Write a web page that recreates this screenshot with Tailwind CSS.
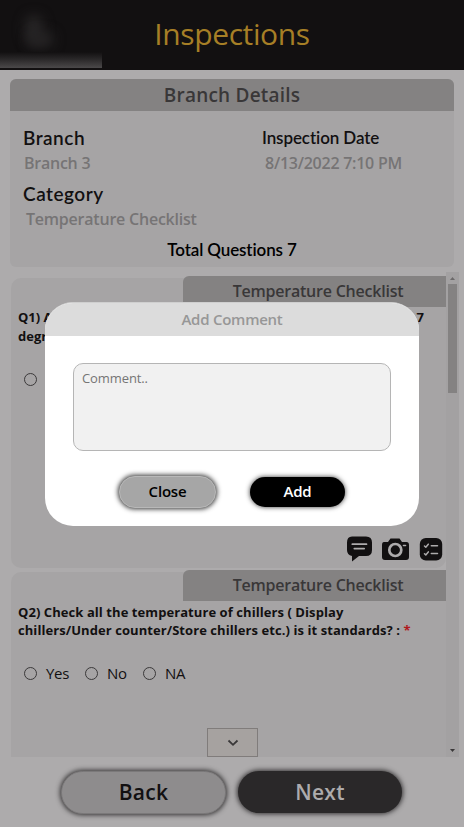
<!DOCTYPE html>
<html lang="en">
<head>
<meta charset="utf-8">
<title>Inspections</title>
<script src="https://cdn.jsdelivr.net/npm/@tailwindcss/browser@4"></script>
</head>
<body class="relative w-[464px] h-[827px] overflow-hidden bg-[#adabac] font-['Open_Sans',sans-serif] whitespace-nowrap text-[#121011]">
<header class="relative h-[70px] bg-[#121011] flex justify-center">
  <div class="absolute left-0 top-0 w-[102px] h-[68px] overflow-hidden">
    <div class="absolute left-[25px] top-[15px] w-[18px] h-[30px] rounded-full bg-[#272526] blur-[6px]"></div>
    <div class="absolute left-[28px] top-[32px] w-[26px] h-[15px] rounded-full bg-[#252324] blur-[6px]"></div>
    <div class="absolute inset-x-0 bottom-0 h-[16px] bg-linear-to-b from-[#121011] to-[#4b494a]"></div>
  </div>
  <h1 class="text-[30px] leading-[68px] tracking-[-0.4px] text-[#a67f26]">Inspections</h1>
</header>
<main class="pt-[9px]">
  <section class="ml-[10px] w-[444px] h-[188px] rounded-[6px] overflow-hidden bg-[#a6a4a5] flex flex-col">
    <h2 class="h-[32px] leading-[32px] text-center bg-[#848282] text-[#393738] text-[19px] font-semibold tracking-[0.2px]">Branch Details</h2>
    <div class="h-[112px] pl-[13px] pt-[14px] flex">
      <dl class="w-[239px]">
        <dt class="font-[Lato] font-semibold text-[19px] leading-[26px] tracking-[0.5px]">Branch</dt>
        <dd class="pl-px font-semibold text-[16px] leading-[24px] tracking-[-0.25px] text-[#767475]">Branch 3</dd>
        <dt class="mt-[6px] font-[Lato] font-semibold text-[19px] leading-[26px] tracking-[0.5px]">Category</dt>
        <dd class="pl-[3px] font-semibold text-[16px] leading-[24px] tracking-[-0.22px] text-[#767475]">Temperature Checklist</dd>
      </dl>
      <dl>
        <dt class="font-[Lato] font-semibold text-[17px] leading-[26px] tracking-[-0.1px]">Inspection Date</dt>
        <dd class="pl-[3px] font-semibold text-[16px] leading-[24px] tracking-[-0.25px] text-[#767475]">8/13/2022 7:10 PM</dd>
      </dl>
    </div>
    <p class="pt-[14px] text-center font-[Lato] font-semibold text-[17px] leading-[26px] tracking-[-0.12px] text-black">Total Questions 7</p>
  </section>
  <section class="mt-[5px] ml-[11px] w-[448px] h-[485px] flex overflow-hidden">
    <div class="w-[435px] pt-[6px] flex flex-col gap-[4px]">
      <article class="h-[290px] shrink-0 rounded-[10px] bg-[#a6a4a5] flex flex-col">
        <h3 class="self-end -mt-[2px] w-[263px] h-[31px] shrink-0 leading-[31px] pl-[7px] rounded-tl-[6px] text-center bg-[#848282] text-[#393738] text-[16px] font-semibold tracking-[-0.22px]">Temperature Checklist</h3>
        <div class="pt-px pl-[7px] pr-[22px] text-[13px] font-bold leading-[19px]">
          <p class="flex justify-between"><span>Q1) Are</span><span>7</span></p><p>degree</p>
        </div>
        <div class="mt-[27px] pl-[13px]"><span class="block size-[13px] rounded-full border border-[#3b393a]"></span></div>
        <div class="mt-auto mb-[5px] pl-[335px] flex items-center">
          <svg class="w-[27px] h-[28px]" viewBox="0 0 27 28"><path fill="#121011" d="M6 1.5H20Q26 1.5 26 7.5V15Q26 21 20 21H13L6 26.5V21Q1 20 1 15V7.5Q1 1.5 6 1.5Z"/><path stroke="#adabac" stroke-width="1.7" stroke-linecap="round" d="M6.3 9.2H20.5M8.3 13.6H18.2"/></svg>
          <svg class="ml-[8px] w-[28px] h-[28px]" viewBox="0 0 28 28"><path fill="#121011" d="M3 7H7L9.5 3.5H18.5L21 7H25.5Q28 7 28 10V22Q28 25 25 25H4Q1 25 1 22V10Q1 7 3 7Z"/><circle cx="14.3" cy="15" r="6" fill="#121011" stroke="#adabac" stroke-width="2.7"/><path stroke="#adabac" stroke-width="1.6" stroke-linecap="round" d="M22.5 10.5H24.5"/></svg>
          <svg class="ml-[10px] w-[24px] h-[28px]" viewBox="0 0 24 28"><rect x=".8" y="3" width="22.4" height="22.5" rx="6" fill="#121011"/><path fill="none" stroke="#adabac" stroke-width="1.5" stroke-linecap="round" stroke-linejoin="round" d="M5.5 11L6.8 12.2L9.3 9.2M12.3 10.7H18.5M5.5 18.7L6.8 19.9L9.3 16.9M12.3 18.4H18.5"/></svg>
        </div>
      </article>
      <article class="h-[300px] shrink-0 rounded-[10px] bg-[#a6a4a5] flex flex-col">
        <h3 class="self-end -mt-[2px] w-[263px] h-[31px] shrink-0 leading-[31px] pl-[7px] rounded-tl-[6px] text-center bg-[#848282] text-[#393738] text-[16px] font-semibold tracking-[-0.22px]">Temperature Checklist</h3>
        <p class="pt-[2px] pl-[7px] text-[13px] font-bold leading-[18px] tracking-[0.07px]">Q2) Check all the temperature of chillers ( Display<br>chillers/Under counter/Store chillers etc.) is it standards? : <span class="text-[#b0191c]">*</span></p>
        <div class="mt-[23px] pl-[13px] flex items-center text-[15px] leading-[22px] tracking-[-0.3px]">
          <span class="size-[13px] rounded-full border border-[#3b393a]"></span><span class="pl-[9px] w-[48px]">Yes</span>
          <span class="size-[13px] rounded-full border border-[#3b393a]"></span><span class="pl-[9px] w-[45px]">No</span>
          <span class="size-[13px] rounded-full border border-[#3b393a]"></span><span class="pl-[9px]">NA</span>
        </div>
        <div class="mt-[44px] ml-[196px] w-[51px] h-[29px] border border-[#807c7b] bg-[#a6a2a0] flex items-center justify-center">
          <svg class="w-[12px] h-[8px]" viewBox="0 0 12 8"><path d="M1.5 1.5L6 5.8L10.5 1.5" fill="none" stroke="#393738" stroke-width="1.8"/></svg>
        </div>
      </article>
    </div>
    <div class="w-[13px] bg-[#a3a1a2] flex flex-col items-center">
      <svg class="w-[9px] h-[12px]" viewBox="0 0 9 12"><path d="M2 8L4.5 5L7 8Z" fill="#6b696a"/></svg>
      <div class="w-[9px] h-[109px] bg-[#848282]"></div>
      <svg class="mt-auto w-[9px] h-[12px]" viewBox="0 0 9 12"><path d="M2 4L4.5 7L7 4Z" fill="#393738"/></svg>
    </div>
  </section>
  <footer class="pt-[14px] pl-[61px] flex gap-[12px] text-[21px] font-semibold tracking-[0.3px]">
    <button class="w-[165px] h-[43px] rounded-full bg-[#8e8c8d] text-[#121011] border border-[#7b797a] shadow-[0_0_5px_1px_#333132]">Back</button>
    <button class="w-[164px] h-[42px] pt-px rounded-full bg-[#2a2829] text-[#adabac] shadow-[0_0_5px_1px_#333132]">Next</button>
  </footer>
</main>
<div role="dialog" class="absolute left-[45px] top-[302px] w-[374px] h-[224px] rounded-[28px] overflow-hidden bg-white border-t border-[#cfcfcf] flex flex-col">
  <h2 class="h-[33px] shrink-0 leading-[33px] text-center bg-[#dcdcdc] text-[#979797] text-[15px] font-semibold tracking-[-0.25px]">Add Comment</h2>
  <textarea class="mt-[27px] ml-[28px] w-[318px] h-[88px] shrink-0 resize-none rounded-[10px] border border-[#b5b5b5] bg-[#f1f1f1] px-[8px] py-[5px] text-[13px] leading-[18px] tracking-[-0.1px] placeholder:text-[#757575]" placeholder="Comment.."></textarea>
  <div class="pt-[25px] pl-[74px] flex items-center gap-[34px] text-[15px] font-semibold tracking-[-0.2px]">
    <button class="w-[97px] h-[32px] pb-[2px] rounded-full bg-[#a6a6a6] border border-[#b8b8b8] text-black shadow-[0_0_5px_1px_#333]">Close</button>
    <button class="w-[95px] h-[30px] pb-[2px] rounded-full bg-black text-white shadow-[0_0_5px_0_#333]">Add</button>
  </div>
</div>
</body>
</html>
